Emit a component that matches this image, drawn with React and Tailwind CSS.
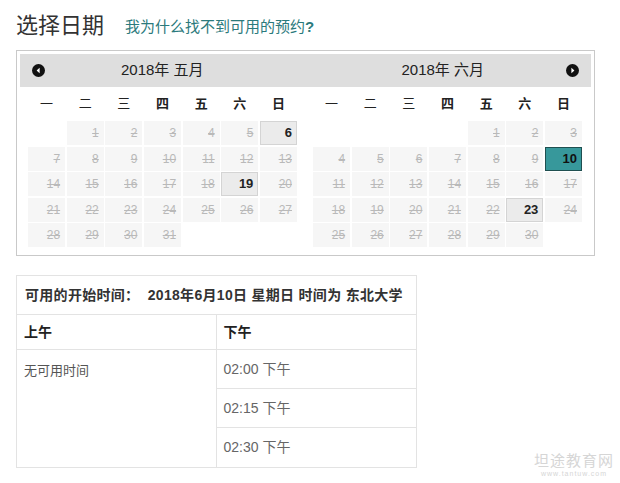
import { useState } from "react";

const FONT = {
  fontFamily: '"Liberation Sans", "Noto Sans CJK SC", sans-serif',
};

const WEEKDAYS = ["一", "二", "三", "四", "五", "六", "日"];

// offset = empty cells before day 1 (week starts Monday)
const months = [
  { title: "2018年 五月", offset: 1, days: 31, open: [6, 19] },
  { title: "2018年 六月", offset: 4, days: 30, open: [10, 23] },
];

const SELECTED = { month: 1, day: 10 };

function Arrow({ dir }) {
  return (
    <svg width="13" height="13" viewBox="0 0 13 13">
      <circle cx="6.5" cy="6.5" r="6.5" fill="#111" />
      {dir === "left" ? (
        <path d="M7.6 3.8 L4.6 6.5 L7.6 9.2 Z" fill="#fff" />
      ) : (
        <path d="M5.4 3.8 L8.4 6.5 L5.4 9.2 Z" fill="#fff" />
      )}
    </svg>
  );
}

function DayCell({ day, open, selected }) {
  if (!day) return <div className="h-[24px]" />;

  if (selected) {
    return (
      <div className="flex h-[24px] items-center justify-end border border-[#1f4f50] bg-[#37989b] pr-[4px] text-[13px] font-bold text-[#111]">
        {day}
      </div>
    );
  }

  if (open) {
    return (
      <div className="flex h-[24px] items-center justify-end border border-[#d4d4d4] bg-[#ebebeb] pr-[4px] text-[13px] font-bold text-[#222]">
        {day}
      </div>
    );
  }

  return (
    <div className="flex h-[24px] items-center justify-end bg-[#f6f6f6] pr-[5px] text-[12px] text-[#b9b9b9] line-through">
      {day}
    </div>
  );
}

function MonthGrid({ month, index }) {
  const cells = [];
  for (let i = 0; i < month.offset; i++) cells.push(null);
  for (let d = 1; d <= month.days; d++) cells.push(d);

  return (
    <div className="w-[269px]">
      <div className="grid h-[34px] grid-cols-7 items-center gap-x-[1.5px]">
        {WEEKDAYS.map((w, i) => (
          <div
            key={w}
            className={`text-center text-[13px] text-[#222] ${
              i > 2 ? "font-bold" : ""
            }`}
          >
            {w}
          </div>
        ))}
      </div>
      <div className="grid grid-cols-7 gap-x-[1.5px] gap-y-[1.5px]">
        {cells.map((d, i) => (
          <DayCell
            key={i}
            day={d}
            open={month.open.includes(d)}
            selected={SELECTED.month === index && SELECTED.day === d}
          />
        ))}
      </div>
    </div>
  );
}

const afternoon = ["02:00 下午", "02:15 下午", "02:30 下午"];

export default function App() {
  const [showHelp, setShowHelp] = useState(false);

  return (
    <div className="relative h-[483px] w-[620px] bg-white" style={FONT}>
      <div className="pl-[16px] pt-[10px]">
        <div className="flex h-[32px] items-center">
          <h1 className="text-[22px] leading-none text-[#333]">选择日期</h1>
          <button
            type="button"
            onClick={() => setShowHelp(!showHelp)}
            className="ml-[21px] mt-[3px] text-[15px] text-[#2b7a7c]"
          >
            我为什么找不到可用的预约<span className="font-bold">?</span>
          </button>
        </div>

        <div className="mt-[8px] w-[579px] border border-[#c9c9c9] p-[3px] pb-[8px]">
          <div className="flex h-[33px] items-center bg-[#dedede] px-[12px]">
            <Arrow dir="left" />
            <div className="flex flex-1 text-[15px] text-[#222]">
              <div className="flex-1 pl-[76px]">{months[0].title}</div>
              <div className="flex-1 pl-[116px]">{months[1].title}</div>
            </div>
            <Arrow dir="right" />
          </div>
          <div className="flex gap-[16px] pl-[8px]">
            {months.map((m, i) => (
              <MonthGrid key={m.title} month={m} index={i} />
            ))}
          </div>
        </div>

        <div className="mt-[19px] w-[401px] border border-[#e3e3e3] text-[14px]">
          <div className="flex h-[39px] items-center border-b border-[#e3e3e3] px-[8px] font-bold tracking-[0.3px] text-[#333]">
            可用的开始时间：&nbsp;&nbsp;2018年6月10日 星期日 时间为 东北大学
          </div>
          <div className="grid grid-cols-2">
            <div className="flex h-[35px] items-center border-b border-r border-[#e3e3e3] px-[7px] font-bold text-[#222]">
              上午
            </div>
            <div className="flex h-[35px] items-center border-b border-[#e3e3e3] px-[7px] font-bold text-[#222]">
              下午
            </div>
            <div className="border-r border-[#e3e3e3] px-[7px] pt-[11px] text-[13px] text-[#555]">
              无可用时间
            </div>
            <div>
              {afternoon.map((t, i) => (
                <div
                  key={t}
                  className={`flex h-[39px] items-center px-[7px] text-[#666] ${
                    i < afternoon.length - 1 ? "border-b border-[#e3e3e3]" : ""
                  }`}
                >
                  {t}
                </div>
              ))}
            </div>
          </div>
        </div>
      </div>

      <div className="absolute bottom-[6px] right-[6px] flex flex-col items-center leading-none text-[#d6d6d6]">
        <span className="text-[15px] tracking-[1px]">坦途教育网</span>
        <span className="mt-[2px] text-[7px] tracking-[1px]">www.tantuw.com</span>
      </div>
    </div>
  );
}
